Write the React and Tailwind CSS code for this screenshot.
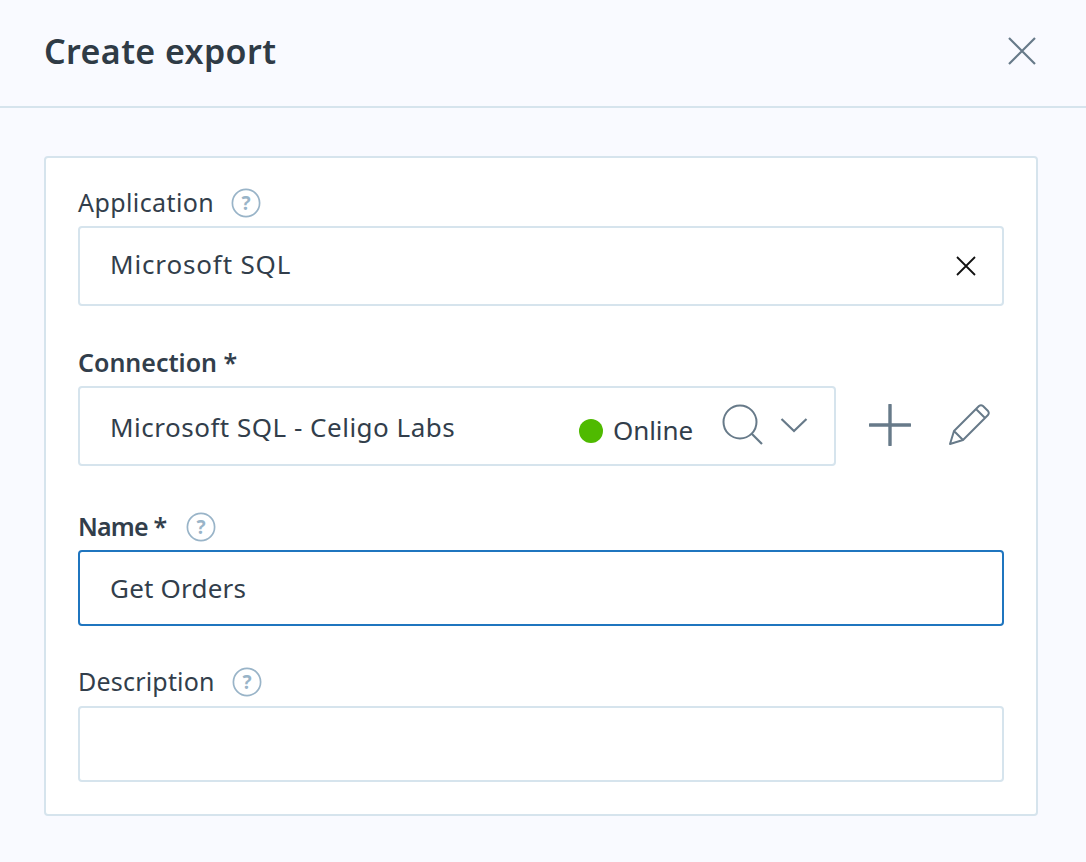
import React from 'react'

function Help() {
  return (
    <svg width="30" height="30" viewBox="0 0 30 30" className="shrink-0">
      <circle cx="15" cy="15" r="13.6" fill="none" stroke="#99b4c8" strokeWidth="1.7" />
      <text x="15" y="21.5" textAnchor="middle" fontSize="19" fontWeight="700" fill="#99b4c8" fontFamily="'Noto Sans', sans-serif">?</text>
    </svg>
  )
}

function Label({ children, bold, gap, track, help = true }) {
  return (
    <div className={`flex items-center h-[30px] ${gap}`}>
      <span className={`text-[25px] leading-[30px] -mt-[2px] text-[#323e4b] ${track} ${bold ? 'font-semibold' : ''}`}>{children}</span>
      {help && <Help />}
    </div>
  )
}

export default function App() {
  return (
    <div className="w-[1086px] h-[862px] overflow-hidden bg-[#f9faff] font-['Noto_Sans',sans-serif] text-[#323e4b]">
      <div className="h-[108px] border-b-2 border-[#d6e4ed] flex items-center justify-between pl-[44px] pr-[49px]">
        <h1 className="text-[34px] font-semibold leading-[44px] tracking-[0.4px] text-[#2f3b46] -mt-[4px]">Create export</h1>
        <svg width="30" height="30" viewBox="0 0 30 30" className="-mt-[4px]">
          <path d="M2 2 L28 28 M28 2 L2 28" stroke="#677a89" strokeWidth="2.2" fill="none" />
        </svg>
      </div>

      <div className="ml-[44px] mt-[48px] w-[994px] h-[660px] bg-white border-2 border-[#d6e4ed] rounded-[4px] pl-[32px] pr-[32px] pt-[30px]">
        <Label gap="gap-[17px]" track="tracking-[0.4px]">Application</Label>
        <div className="mt-[8px] h-[80px] border-2 border-[#d6e4ed] rounded-[4px] flex items-center justify-between pl-[30px] pr-[26px]">
          <span className="text-[26px] tracking-[0.85px] -mt-[4px]">Microsoft SQL</span>
          <svg width="20" height="20" viewBox="0 0 20 20">
            <path d="M1 1 L19 19 M19 1 L1 19" stroke="#111" strokeWidth="1.8" fill="none" />
          </svg>
        </div>

        <div className="mt-[42px]">
          <Label bold help={false} track="tracking-[0px]">Connection *</Label>
        </div>
        <div className="mt-[8px] flex items-center">
          <div className="w-[758px] h-[80px] border-2 border-[#d6e4ed] rounded-[4px] flex items-center pl-[30px] pr-[26px]">
            <span className="text-[26px] tracking-[0.5px] flex-1 mt-[2px]">Microsoft SQL - Celigo Labs</span>
            <span className="w-[24px] h-[24px] rounded-full bg-[#4fba00] mr-[10px] mt-[10px] ml-[2px]" />
            <span className="text-[26px] -tracking-[0.1px] mr-[29px] mt-[8px]">Online</span>
            <svg width="42" height="42" viewBox="0 0 42 42" className="mr-[16px] -mt-[2px]">
              <circle cx="18" cy="18" r="16.5" fill="none" stroke="#677a89" strokeWidth="2" />
              <path d="M29.5 29.5 L40 40" stroke="#677a89" strokeWidth="2.2" fill="none" />
            </svg>
            <svg width="28" height="16" viewBox="0 0 28 16" className="-mt-[3px]">
              <path d="M1.5 2 L14 14 L26.5 2" stroke="#677a89" strokeWidth="2.2" fill="none" />
            </svg>
          </div>
          <svg width="42" height="42" viewBox="0 0 42 42" className="ml-[33px] -mt-[2px]">
            <path d="M21 1 V41 M1 21 H41" stroke="#677a89" strokeWidth="3.4" strokeLinecap="round" fill="none" />
          </svg>
          <svg width="42" height="42" viewBox="0 0 42 42" className="ml-[37px] -mt-[2px]">
            <path d="M2 40 L6 27 L31 2 Q33 0.5 35 2 L40 7 Q41.5 9 40 11 L15 36 Z M6 27 L15 36 M28 5 L37 14" stroke="#677a89" strokeWidth="2" strokeLinejoin="round" fill="none" />
          </svg>
        </div>

        <div className="mt-[46px]">
          <Label bold gap="gap-[20px]" track="-tracking-[0.8px]">Name *</Label>
        </div>
        <div className="mt-[8px] h-[76px] border-2 border-[#1f75bf] rounded-[4px] flex items-center pl-[30px]">
          <span className="text-[26px] tracking-[0.2px]">Get Orders</span>
        </div>

        <div className="mt-[41px]">
          <Label gap="gap-[17px]" track="tracking-[0.2px]">Description</Label>
        </div>
        <div className="mt-[9px] h-[76px] border-2 border-[#d6e4ed] rounded-[4px]" />
      </div>
    </div>
  )
}
